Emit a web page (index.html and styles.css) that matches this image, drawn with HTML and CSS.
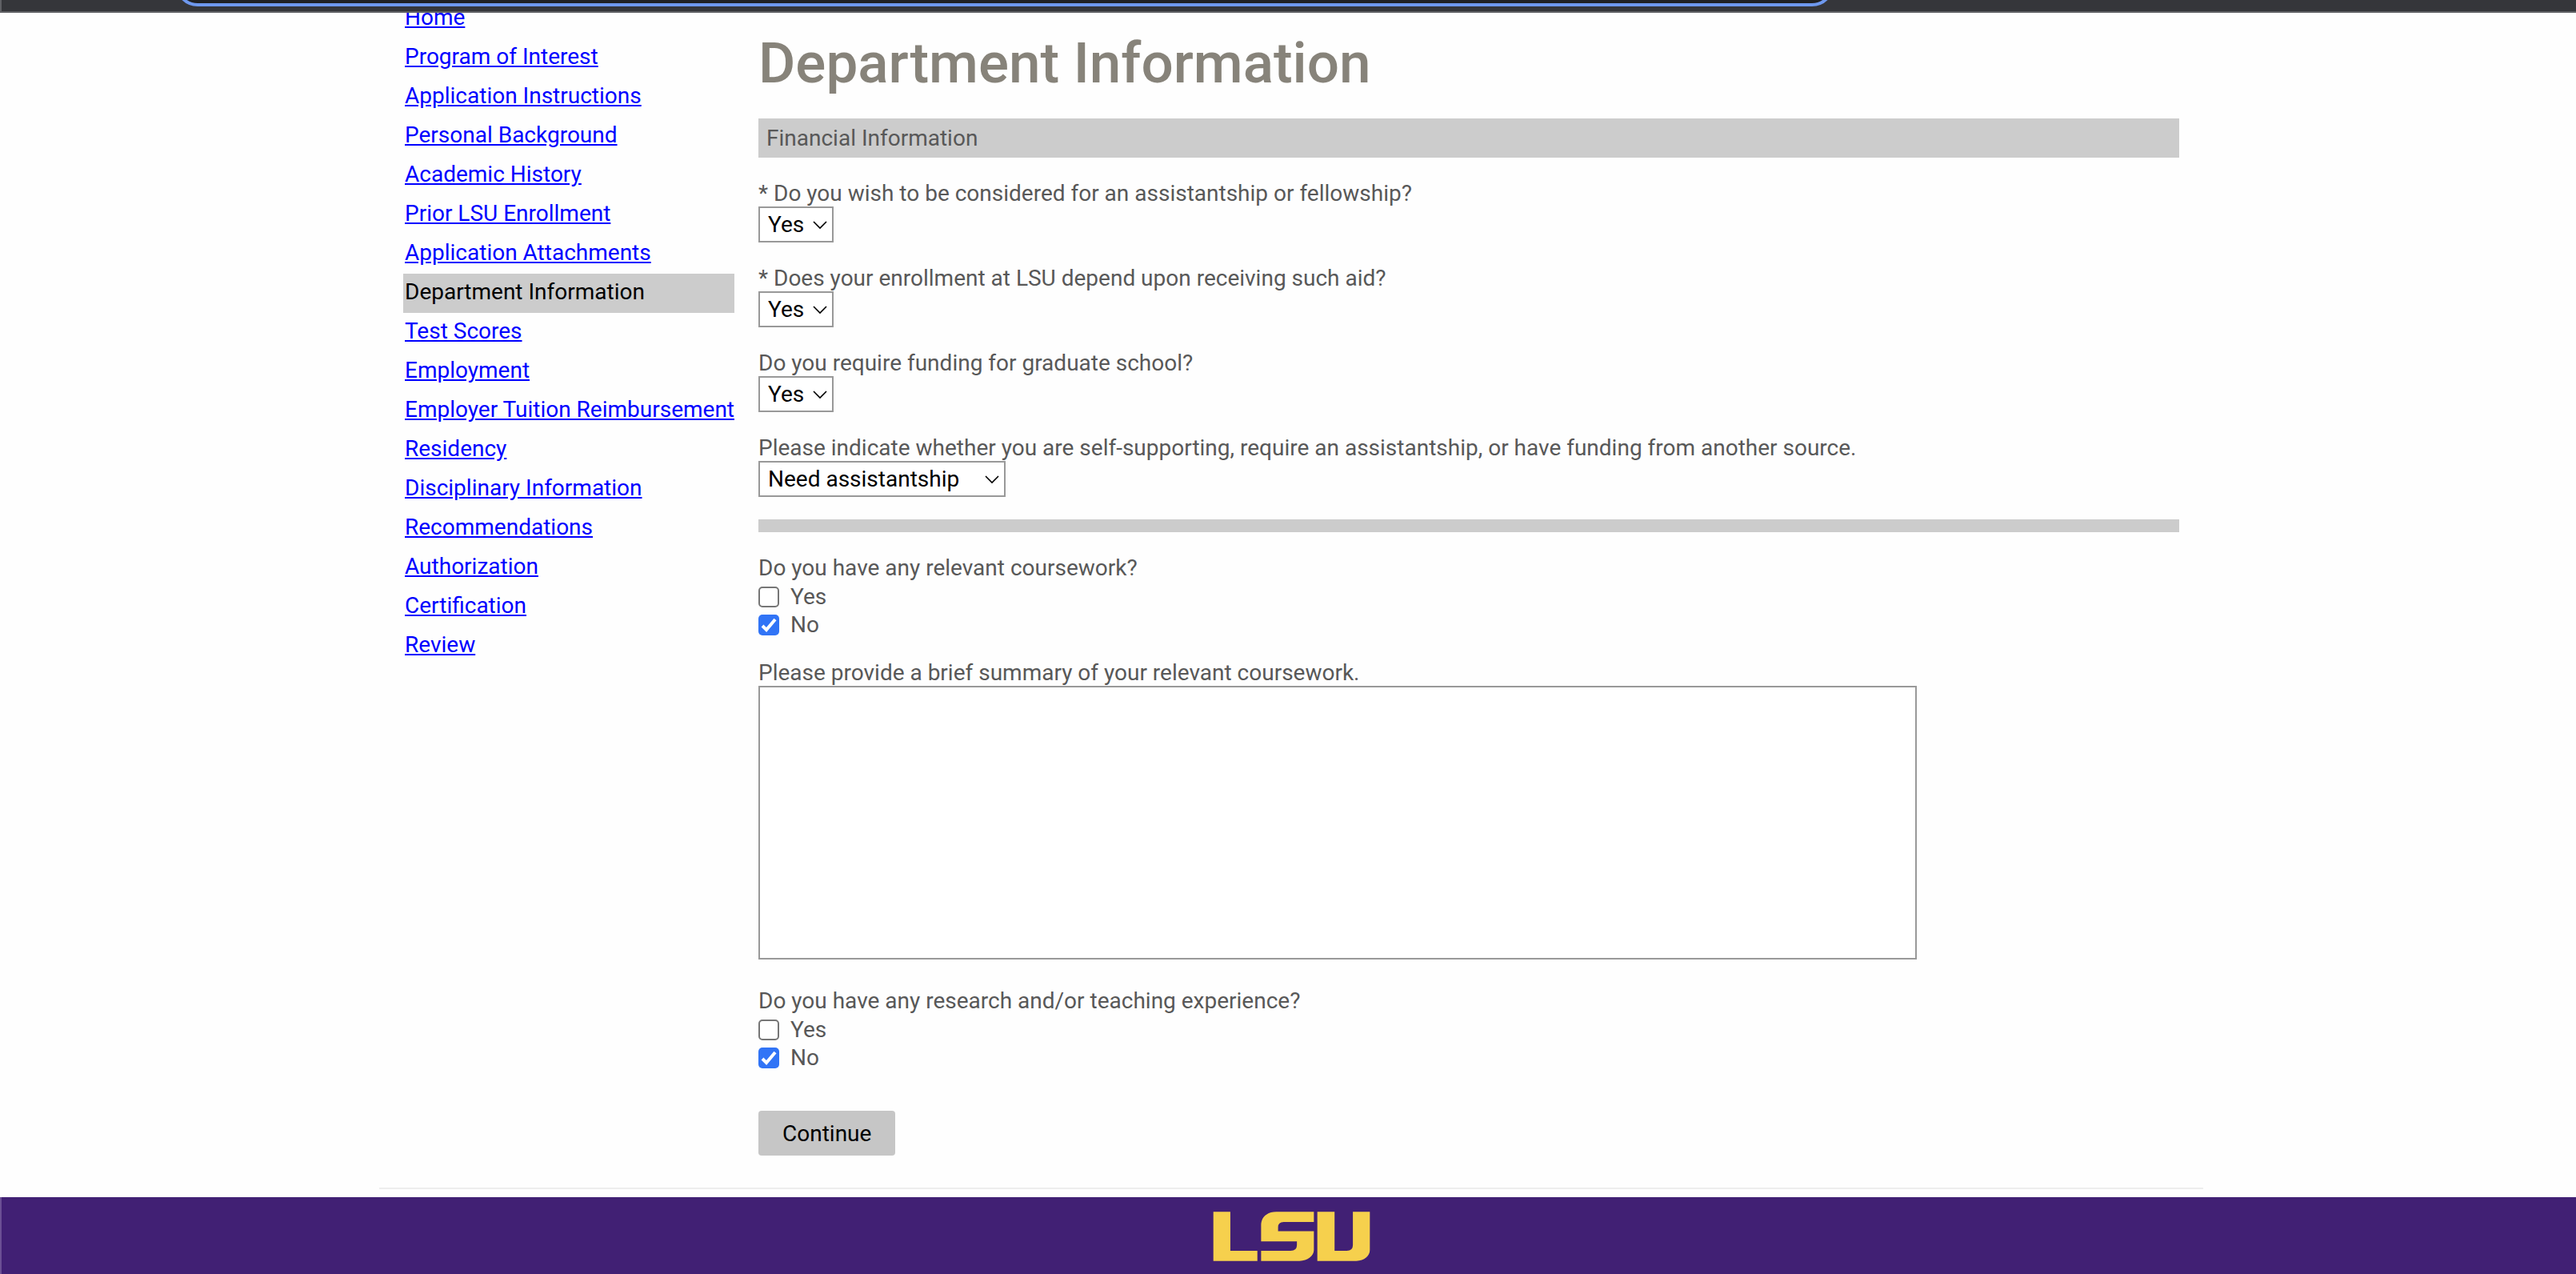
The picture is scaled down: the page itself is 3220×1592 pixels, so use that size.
FILE: index.html
```html
<!DOCTYPE html>
<html lang="en">
<head>
<meta charset="utf-8">
<title>Department Information</title>
<link rel="stylesheet" href="styles.css">
</head>
<body>
<div class="chrome"><div class="address"></div></div>
<div class="page">
  <div class="columns">
    <nav class="menu" aria-label="Application sections">
      <ul class="menu-list">
        <li><a href="#home">Home</a></li>
        <li><a href="#program">Program of Interest</a></li>
        <li><a href="#instructions">Application Instructions</a></li>
        <li><a href="#background">Personal Background</a></li>
        <li><a href="#academic">Academic History</a></li>
        <li><a href="#prior">Prior LSU Enrollment</a></li>
        <li><a href="#attachments">Application Attachments</a></li>
        <li class="current" aria-current="page">Department Information</li>
        <li><a href="#scores">Test Scores</a></li>
        <li><a href="#employment">Employment</a></li>
        <li><a href="#tuition">Employer Tuition Reimbursement</a></li>
        <li><a href="#residency">Residency</a></li>
        <li><a href="#disciplinary">Disciplinary Information</a></li>
        <li><a href="#recommendations">Recommendations</a></li>
        <li><a href="#authorization">Authorization</a></li>
        <li><a href="#certification">Certification</a></li>
        <li><a href="#review">Review</a></li>
      </ul>
    </nav>
    <main class="content">
      <h1>Department Information</h1>
      <form class="form">
        <h2 class="band">Financial Information</h2>
        <div class="field">
          <label for="assist">* Do you wish to be considered for an assistantship or fellowship?</label>
          <span class="select"><select id="assist"><option>Yes</option></select><svg viewBox="0 0 18 12" aria-hidden="true"><path d="M1 2l8 8 8-8"/></svg></span>
        </div>
        <div class="field">
          <label for="depend">* Does your enrollment at LSU depend upon receiving such aid?</label>
          <span class="select"><select id="depend"><option>Yes</option></select><svg viewBox="0 0 18 12" aria-hidden="true"><path d="M1 2l8 8 8-8"/></svg></span>
        </div>
        <div class="field">
          <label for="funding">Do you require funding for graduate school?</label>
          <span class="select"><select id="funding"><option>Yes</option></select><svg viewBox="0 0 18 12" aria-hidden="true"><path d="M1 2l8 8 8-8"/></svg></span>
        </div>
        <div class="field">
          <label for="support">Please indicate whether you are self-supporting, require an assistantship, or have funding from another source.</label>
          <span class="select wide"><select id="support"><option>Need assistantship</option></select><svg viewBox="0 0 18 12" aria-hidden="true"><path d="M1 2l8 8 8-8"/></svg></span>
        </div>
        <div class="divider"></div>
        <fieldset class="field choices">
          <legend>Do you have any relevant coursework?</legend>
          <label class="check"><input type="checkbox">Yes</label>
          <label class="check"><input type="checkbox" checked>No</label>
        </fieldset>
        <div class="field essay">
          <label for="summary">Please provide a brief summary of your relevant coursework.</label>
          <textarea id="summary"></textarea>
        </div>
        <fieldset class="field choices">
          <legend>Do you have any research and/or teaching experience?</legend>
          <label class="check"><input type="checkbox">Yes</label>
          <label class="check"><input type="checkbox" checked>No</label>
        </fieldset>
        <button type="button" class="continue">Continue</button>
      </form>
    </main>
  </div>
</div>
<footer class="footer">
  <svg class="logo" viewBox="107 131 590 187" role="img" aria-label="LSU">
    <path d="M107 132H171V279H273V317H107Z"/>
    <path d="M486 132V170H372Q351 170 351 190V205H486V276C486 298 462 317 432 317H287V279H398Q422 279 422 258V243H287V182C287 152 310 132 344 132Z"/>
    <path d="M499 132H564V279H610Q633 279 633 258V132H697V276C697 298 676 317 646 317H499Z"/>
  </svg>
</footer>
</body>
</html>
```
FILE: styles.css
```css
* { box-sizing: border-box; }

body {
  margin: 0;
  background: #fefefe;
  color: #585858;
  font-family: Roboto, Arial, sans-serif;
  font-size: 28px;
  line-height: 33px;
}

/* lower edge of the browser toolbar */
.chrome {
  height: 16px;
  overflow: hidden;
  display: flex;
  align-items: flex-end;
  padding: 0 927px 6px 217px;
  background: #35363a;
  border-bottom: 2px solid #5f6064;
  border-left: 2px solid #5f6064;
}

.address {
  flex: 1;
  height: 56px;
  background: #202124;
  border: 4px solid #6e98ee;
  border-radius: 28px;
}

.page {
  margin: 0 466px 0 474px;
  padding: 0 30px 40px;
  border-bottom: 2px solid #eee;
}

.columns {
  display: flex;
  align-items: flex-start;
  gap: 30px;
}

.menu {
  height: 816px;
  overflow: hidden;
  display: flex;
  align-items: flex-end;
}

.menu-list {
  margin: 0;
  padding: 0;
  list-style: none;
  white-space: nowrap;
}

.menu-list li {
  padding: 6px 0 10px 2px;
}

.menu-list a {
  color: #00f;
}

.menu-list .current {
  background: #ccc;
  color: #000;
}

.content {
  flex: 1;
}

h1 {
  margin: 0;
  padding: 21px 0 27px;
  font-size: 71px;
  line-height: 84px;
  font-weight: 500;
  color: #87837a;
}

.form {
  display: flex;
  flex-direction: column;
  align-items: stretch;
}

.band {
  margin: 0 0 28px;
  padding: 8px 10px;
  background: #ccc;
  font-size: 28px;
  font-weight: 400;
}

.field {
  display: flex;
  flex-direction: column;
  align-items: flex-start;
  margin: 0 0 28px;
  padding: 0;
  border: 0;
}

.choices {
  margin-bottom: 26px;
}

.essay {
  margin-bottom: 35px;
}

legend {
  padding: 0 0 2px;
}

.select {
  display: grid;
  align-items: center;
  width: 94px;
}

.select.wide {
  width: 309px;
}

.select select,
.select svg {
  grid-area: 1 / 1;
}

.select select {
  appearance: none;
  width: 100%;
  height: 45px;
  padding: 0 10px;
  border: 2px solid #999;
  border-radius: 0;
  background: #fff;
  color: #000;
  font: inherit;
}

.select svg {
  justify-self: end;
  width: 18px;
  height: 12px;
  margin-right: 8px;
  fill: none;
  stroke: #000;
  stroke-width: 1.6;
  pointer-events: none;
}

.divider {
  height: 16px;
  margin-bottom: 28px;
  background: #ccc;
}

.check {
  display: flex;
  align-items: center;
  gap: 14px;
  height: 35px;
}

.check input {
  appearance: none;
  width: 26px;
  height: 26px;
  margin: 0;
  border: 2px solid #767676;
  border-radius: 5px;
  background: #fff;
}

.check input:checked {
  border: 0;
  background: #3174f6 url("data:image/svg+xml,%3Csvg xmlns='http://www.w3.org/2000/svg' viewBox='0 0 26 26'%3E%3Cpath d='M5 14l5 5L21 6' fill='none' stroke='%23fff' stroke-width='4'/%3E%3C/svg%3E");
}

textarea {
  width: 1448px;
  max-width: 100%;
  height: 342px;
  padding: 4px;
  border: 2px solid #999;
  background: #fff;
  font: inherit;
  resize: none;
}

.continue {
  align-self: flex-start;
  margin-top: 23px;
  padding: 12px 30px 11px;
  border: 0;
  border-radius: 4px;
  background: #c6c6c6;
  color: #000;
  font: inherit;
}

.footer {
  display: flex;
  justify-content: center;
  margin-top: 10px;
  padding: 18px 0 16px 6px;
  background: #412074;
  border-left: 2px solid #6b4f94;
}

.logo {
  width: 197px;
  height: 62px;
  fill: #f6d04d;
}
```
